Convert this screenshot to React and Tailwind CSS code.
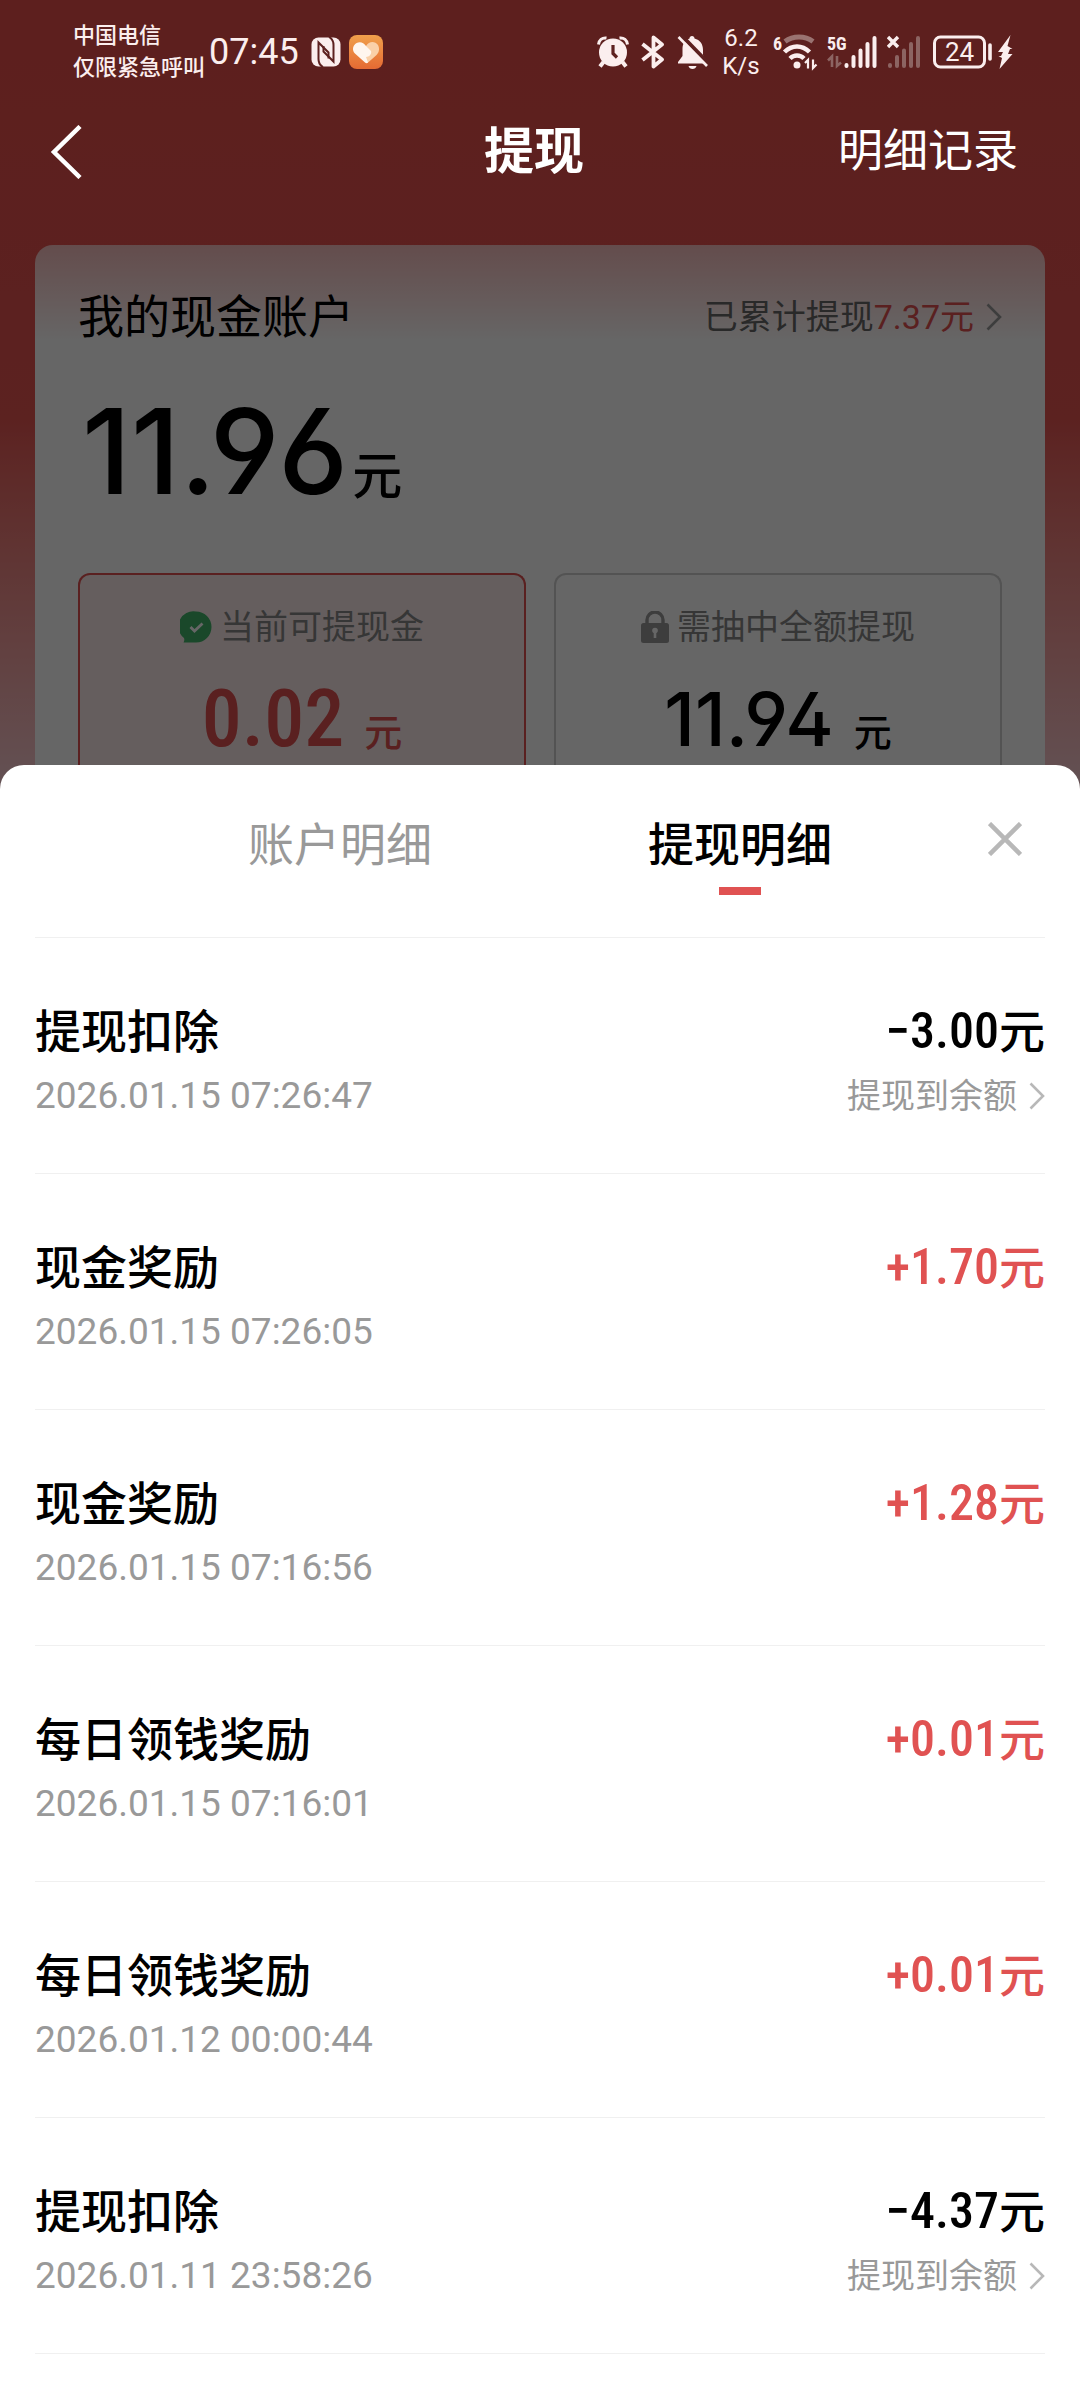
import React, { useState } from 'react';

const records = [
  { id: 1, title: '提现扣除', time: '2026.01.15 07:26:47', amount: '−3.00', income: false },
  { id: 2, title: '现金奖励', time: '2026.01.15 07:26:05', amount: '+1.70', income: true },
  { id: 3, title: '现金奖励', time: '2026.01.15 07:16:56', amount: '+1.28', income: true },
  { id: 4, title: '每日领钱奖励', time: '2026.01.15 07:16:01', amount: '+0.01', income: true },
  { id: 5, title: '每日领钱奖励', time: '2026.01.12 00:00:44', amount: '+0.01', income: true },
  { id: 6, title: '提现扣除', time: '2026.01.11 23:58:26', amount: '−4.37', income: false }
];

const tabs = [
  { key: 'account', label: '账户明细' },
  { key: 'withdraw', label: '提现明细' }
];

const ChevronRight = ({ className }) => (
  <svg viewBox="0 0 16 28" className={className} fill="none" stroke="currentColor" strokeWidth="2.6">
    <path d="M1.5 1.5L14 14L1.5 26.5" />
  </svg>
);

const NfcIcon = () => (
  <svg viewBox="0 0 30 30" className="h-[30px] w-[30px]">
    <rect x="0.5" y="0.5" width="29" height="29" rx="7" fill="#fbeeee" />
    <path d="M12 30C8.5 28 7.5 26 7.5 22V5.5L17.5 15.5V21.5" fill="none" stroke="#5d2120" strokeWidth="2" />
    <path d="M18 0C21.5 2 22.5 4 22.5 8V24.5L12.5 14.5V9" fill="none" stroke="#5d2120" strokeWidth="2" />
  </svg>
);

const HeartIcon = () => (
  <svg viewBox="0 0 34 34" className="h-[34px] w-[34px]">
    <defs>
      <linearGradient id="heartBg" x1="0" y1="0" x2="0" y2="1">
        <stop offset="0" stopColor="#f0a04c" />
        <stop offset="1" stopColor="#e56a33" />
      </linearGradient>
    </defs>
    <rect width="34" height="34" rx="8" fill="url(#heartBg)" />
    <path d="M17 11C20 6 26 6 29 10C31 14 30 18 27 20.5L18.5 28L12 20Z" fill="#fad0a8" />
    <path d="M5 10.5C8 6 14 6 17 11L22 16C23 19 20 22 17 22L19 27.5Q17.5 29 16 27.5L6.5 19C3.5 16.5 3.5 13 5 10.5Z" fill="#fff6ee" />
  </svg>
);

const AlarmIcon = () => (
  <svg viewBox="0 0 32 32" className="h-8 w-8">
    <circle cx="16" cy="16.5" r="14" fill="#fbeeee" />
    <path d="M1.5 8.5C2 4 5 1.5 9.5 2M30.5 8.5C30 4 27 1.5 22.5 2" fill="none" stroke="#fbeeee" strokeWidth="3" />
    <path d="M6.5 26L3 30.5M25.5 26L29 30.5" stroke="#fbeeee" strokeWidth="4" />
    <path d="M16 9V17.5L20 21.5" fill="none" stroke="#5d2120" strokeWidth="3.2" />
  </svg>
);

const BluetoothIcon = () => (
  <svg viewBox="0 0 24 34" className="h-[34px] w-6" fill="none" stroke="#fbeeee" strokeWidth="3.8" strokeLinejoin="round">
    <path d="M1.5 9L21 24.5L12.5 31.5V2.5L21 9.5L1.5 25" />
  </svg>
);

const BellOffIcon = () => (
  <svg viewBox="0 0 32 34" className="h-[34px] w-8">
    <path d="M15 1C16.5 1 17.5 2 17.5 3.5C23 5 26 9 26 15V20L29 27V28.5H1V27L5.5 21V14C5.5 8.5 8 5 12.5 3.5C12.5 2 13.5 1 15 1Z" fill="#fbeeee" />
    <path d="M11.5 31H19.5C19 33 17.5 34 15.5 34C13.5 34 12 33 11.5 31Z" fill="#fbeeee" />
    <path d="M4 0L33 30" stroke="#5d2120" strokeWidth="4" />
    <path d="M1.5 2L30 31" stroke="#fbeeee" strokeWidth="2.6" />
  </svg>
);

const WifiIcon = () => (
  <svg viewBox="0 0 46 36" className="h-9 w-[46px] overflow-visible" fill="none">
    <text x="0" y="16" fill="#fbeeee" fontSize="18" fontWeight="700" fontFamily="Roboto Condensed, sans-serif">6</text>
    <path d="M12 7.5C20 1.5 32 1.5 40 7.5" stroke="#9a7371" strokeWidth="5" />
    <path d="M11.5 18C19 10.5 29 10.5 36.5 18" stroke="#fbeeee" strokeWidth="4.5" />
    <path d="M17 24.5C21 20.5 27 20.5 31 24.5" stroke="#fbeeee" strokeWidth="4.5" />
    <circle cx="24" cy="31" r="3.5" fill="#fbeeee" />
    <path d="M32 29L35 26V34.5M43.5 30.5L40 34V25.5" stroke="#fbeeee" strokeWidth="2.2" />
  </svg>
);

const SignalIcon = () => (
  <svg viewBox="0 0 52 34" className="h-[34px] w-[52px] overflow-visible" fill="none">
    <text x="0" y="15" fill="#fbeeee" fontSize="18" fontWeight="700" fontFamily="Roboto Condensed, sans-serif">5G</text>
    <path d="M1 25.5L5 21.5V32M14 27.5L10 31V21" stroke="#8c6462" strokeWidth="2.6" />
    <path d="M19.5 31V30M26.5 31V22M33.5 31V15.5M40.5 31V9M47.5 31V3" stroke="#fbeeee" strokeWidth="4" strokeLinecap="round" />
  </svg>
);

const NoSignalIcon = () => (
  <svg viewBox="0 0 34 34" className="h-[34px] w-[34px]" fill="none">
    <path d="M1 2L11 12M11 2L1 12" stroke="#fbeeee" strokeWidth="3.4" />
    <path d="M3 31V30M10 31V22M17 31V15.5M24 31V9M31 31V3" stroke="#8c6462" strokeWidth="4" strokeLinecap="round" />
  </svg>
);

const BatteryIcon = () => (
  <svg viewBox="0 0 80 36" className="h-9 w-20" fill="none">
    <rect x="1.5" y="3" width="50" height="30" rx="6" stroke="#fbeeee" strokeWidth="3" />
    <text x="26.5" y="27" fill="#fbeeee" fontSize="26" textAnchor="middle" fontFamily="Roboto, sans-serif">24</text>
    <path d="M57 11V25" stroke="#fbeeee" strokeWidth="3.6" strokeLinecap="round" />
    <path d="M77.5 1L65 18H70L68 22H65.5L69 24L66.5 35L79.5 20H75L77 15H79.5L74.5 12Z" fill="#fbeeee" />
  </svg>
);

const WechatPayIcon = () => (
  <svg viewBox="0 0 32 32" className="h-8 w-8">
    <path d="M16 0.5A15 15 0 1 1 16 31.5H3.5C4.5 30 4.5 28.5 4 27A15 15 0 0 1 16 0.5Z" fill="#42b36a" />
    <path d="M10.5 16L14.5 20L22.5 12.5" fill="none" stroke="#fff" strokeWidth="2.8" />
  </svg>
);

const LockIcon = () => (
  <svg viewBox="0 0 28 32" className="h-8 w-7">
    <path d="M6 13V9A8 8 0 0 1 22 9V13" fill="none" stroke="#999" strokeWidth="3.4" />
    <rect y="12" width="28" height="20" rx="2.5" fill="#999" />
    <circle cx="14" cy="19.5" r="2.8" fill="#fff" />
    <path d="M14 20V27" stroke="#fff" strokeWidth="2.6" />
  </svg>
);

const StatusBar = () => (
  <div className="flex h-[104px] items-center justify-between pr-[67px] pl-[73px] text-[#fbeeee]">
    <div className="flex items-center">
      <div className="text-[22px] leading-8 font-medium">
        <p>中国电信</p>
        <p>仅限紧急呼叫</p>
      </div>
      <span className="ml-1 text-[36px]">07:45</span>
      <span className="ml-3"><NfcIcon /></span>
      <span className="ml-2"><HeartIcon /></span>
    </div>
    <div className="flex items-center">
      <AlarmIcon />
      <span className="ml-3"><BluetoothIcon /></span>
      <span className="ml-3"><BellOffIcon /></span>
      <div className="ml-3 w-10 text-center text-[24px] leading-7">
        <p>6.2</p>
        <p>K/s</p>
      </div>
      <span className="ml-3"><WifiIcon /></span>
      <span className="ml-2"><SignalIcon /></span>
      <span className="ml-2"><NoSignalIcon /></span>
      <span className="ml-3"><BatteryIcon /></span>
    </div>
  </div>
);

const NavBar = () => (
  <header className="grid h-[96px] grid-cols-3 items-center pr-[62px] pl-[50px] text-white">
    <button type="button" aria-label="返回" className="justify-self-start">
      <svg viewBox="0 0 32 54" className="h-[54px] w-8" fill="none" stroke="currentColor" strokeWidth="4.5">
        <path d="M30 1.5L4 27L30 52.5" />
      </svg>
    </button>
    <h1 className="text-center text-[50px] font-bold">提现</h1>
    <button type="button" className="justify-self-end text-[45px]">明细记录</button>
  </header>
);

const AccountCard = () => (
  <section className="mx-[35px] mt-[45px] rounded-t-[18px] bg-linear-to-b from-[#fabfbf] to-white to-[96px] px-[43px] pt-10">
    <div className="flex items-center justify-between">
      <h2 className="text-[46px] leading-16 text-black">我的现金账户</h2>
      <a href="#history" className="flex items-center text-[34px] text-[#666]">
        已累计提现<span className="text-[#e05252]">7.37元</span>
        <ChevronRight className="ml-3 h-7 w-4 text-[#999]" />
      </a>
    </div>
    <p className="mt-7 flex items-baseline pl-1 text-black">
      <span className="font-['Inter'] text-[118px] leading-[148px] font-medium [font-feature-settings:'ss01']">11.96</span>
      <span className="ml-1 text-[50px] font-medium">元</span>
    </p>
    <div className="mt-12 grid grid-cols-2 gap-7">
      <div className="rounded-t-xl border-2 border-b-0 border-[#e05252] bg-[#fdecec] pt-6 pb-[26px] text-center">
        <p className="flex items-center justify-center gap-2 text-[34px] leading-14 text-[#888]">
          <WechatPayIcon />
          当前可提现金
        </p>
        <p className="mt-4 flex items-baseline justify-center gap-5 text-[#e05252]">
          <span className="font-['Roboto_Condensed'] text-[80px] leading-24 font-medium">0.02</span>
          <span className="text-[38px] font-medium">元</span>
        </p>
      </div>
      <div className="rounded-t-xl border-2 border-b-0 border-[#d0d0d0] pt-6 pb-[26px] text-center">
        <p className="flex items-center justify-center gap-2 text-[34px] leading-14 text-[#888]">
          <LockIcon />
          需抽中全额提现
        </p>
        <p className="mt-4 flex items-baseline justify-center gap-5 text-black">
          <span className="font-['Inter'] text-[74px] leading-24 font-medium [font-feature-settings:'ss01']">11.94</span>
          <span className="text-[38px] font-medium">元</span>
        </p>
      </div>
    </div>
  </section>
);

const RecordItem = ({ record }) => (
  <li className="flex h-[236px] justify-between border-b border-[#f0f0f0] pt-[62px]">
    <div>
      <h3 className="text-[46px] leading-16 font-medium text-black">{record.title}</h3>
      <time className="block text-[37px] leading-16 text-[#999]">{record.time}</time>
    </div>
    <div className="text-right">
      <p className={`flex items-baseline justify-end text-[46px] leading-16 font-medium ${record.income ? 'text-[#e05252]' : 'text-black'}`}>
        <span className="font-['Roboto_Condensed'] text-[50px] leading-none">{record.amount}</span>元
      </p>
      {!record.income && (
        <a href="#balance" className="flex items-center justify-end text-[34px] leading-16 text-[#999]">
          提现到余额
          <ChevronRight className="ml-3 h-7 w-4 text-[#b8b8b8]" />
        </a>
      )}
    </div>
  </li>
);

const DetailSheet = () => {
  const [active, setActive] = useState('withdraw');

  return (
    <section className="relative z-20 -mt-7 grow rounded-t-3xl bg-white">
      <div className="grid grid-cols-[140px_1fr_1fr_140px] pt-[42px]">
        {tabs.map((tab) => (
          <button
            key={tab.key}
            type="button"
            onClick={() => setActive(tab.key)}
            className={`flex flex-col items-center text-[46px] leading-[76px] first:col-start-2 ${active === tab.key ? 'font-medium text-black' : 'text-[#999]'}`}
          >
            {tab.label}
            {active === tab.key && <span className="mt-1 h-2 w-[42px] bg-[#e05252]" />}
          </button>
        ))}
        <button type="button" aria-label="关闭" className="h-16 justify-self-end pr-[58px]">
          <svg viewBox="0 0 34 34" className="h-[34px] w-[34px]" fill="none" stroke="#b8b8b8" strokeWidth="4.5">
            <path d="M1.5 1.5L32.5 32.5M32.5 1.5L1.5 32.5" />
          </svg>
        </button>
      </div>
      <ul className="mx-[35px] mt-[42px] border-t border-[#f0f0f0]">
        {records.map((record) => (
          <RecordItem key={record.id} record={record} />
        ))}
      </ul>
    </section>
  );
};

const App = () => {
  return (
    <div className="flex min-h-screen flex-col overflow-hidden bg-white font-['Roboto','Noto_Sans_CJK_SC',sans-serif]">
      <div className="relative bg-linear-to-b from-[#e94e4b] via-[#e65552] via-[420px] to-[#f8c9cf] to-[780px]">
        {/* Dimming layer, the bars stay above it */}
        <div className="absolute inset-0 z-10 bg-black/60" />
        <div className="relative z-20">
          <StatusBar />
          <NavBar />
        </div>
        <AccountCard />
      </div>
      <DetailSheet />
    </div>
  );
};

export default App;
